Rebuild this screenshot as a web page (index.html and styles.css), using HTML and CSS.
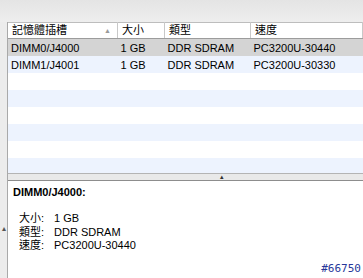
FILE: index.html
```html
<!DOCTYPE html>
<html lang="zh-Hant">
<head>
  <meta charset="UTF-8" />
  <title>記憶體</title>
  <link rel="stylesheet" href="styles.css">
</head>
<body>
  <div class="toolbar"></div>
  <div class="main">
    <div class="gutter"><span class="grip">&#9652;</span></div>
    <div class="panes">
      <div class="list">
        <table>
          <thead>
            <tr>
              <th class="c1">記憶體插槽<span class="sort">&#9650;</span></th>
              <th class="c2">大小</th>
              <th class="c3">類型</th>
              <th class="c4">速度</th>
              <th class="c5"></th>
            </tr>
          </thead>
          <tbody>
            <tr class="sel"><td>DIMM0/J4000</td><td>1 GB</td><td>DDR SDRAM</td><td>PC3200U-30440</td><td></td></tr>
            <tr class="alt"><td>DIMM1/J4001</td><td>1 GB</td><td>DDR SDRAM</td><td>PC3200U-30330</td><td></td></tr>
            <tr><td></td><td></td><td></td><td></td><td></td></tr>
            <tr class="alt"><td></td><td></td><td></td><td></td><td></td></tr>
            <tr><td></td><td></td><td></td><td></td><td></td></tr>
            <tr class="alt"><td></td><td></td><td></td><td></td><td></td></tr>
            <tr><td></td><td></td><td></td><td></td><td></td></tr>
            <tr class="alt"><td></td><td></td><td></td><td></td><td></td></tr>
          </tbody>
        </table>
      </div>
      <div class="divider"><span class="knob">&#9652;</span></div>
      <div class="detail">
        <h2>DIMM0/J4000:</h2>
        <dl>
          <dt>大小:</dt><dd>1 GB</dd>
          <dt>類型:</dt><dd>DDR SDRAM</dd>
          <dt>速度:</dt><dd>PC3200U-30440</dd>
        </dl>
        <div class="tag">#66750</div>
      </div>
    </div>
  </div>
</body>
</html>
```

FILE: styles.css
```css
body { margin: 0; background: #ececec; font-family: "Liberation Sans", "Noto Sans CJK TC", sans-serif; font-size: 11px; color: #000; width: 363px; height: 278px; overflow: hidden; }
.toolbar { height: 22px; background: linear-gradient(#e4e4e4, #eeeeee); }
.main { display: flex; height: 256px; }
.gutter { width: 8px; background: #ececec; display: flex; align-items: flex-start; justify-content: center; }
.grip { font-size: 8px; color: #555; margin-top: 202px; }
.panes { flex: 1; display: flex; flex-direction: column; border-left: 1px solid #a9a9a9; }
.list { height: 151px; background: #fff; overflow: hidden; }
table { width: 100%; border-collapse: collapse; table-layout: fixed; }
th { height: 15px; padding: 0 0 0 4px; text-align: left; font-weight: normal; font-size: 11px; line-height: 15px; background: #fff; border-top: 1px solid #bdbdbd; border-bottom: 1px solid #9c9c9c; border-right: 1px solid #c8c8c8; position: relative; }
.sort { position: absolute; right: 6px; top: 4px; font-size: 7px; line-height: 7px; color: #9a9a9a; }
.c1 { width: 105px; }
.c2 { width: 42px; }
.c3 { width: 81px; }
.c4 { width: 107px; }
td { height: 17px; padding: 0 0 0 3px; white-space: nowrap; overflow: hidden; }
tr.sel td { background: #d4d4d4; }
tr.alt td { background: #edf3fe; }
.divider { height: 6px; background: #e9e9e9; border-top: 1px solid #b4b4b4; border-bottom: 1px solid #8d8d8d; display: flex; justify-content: center; align-items: center; font-size: 7px; color: #333; line-height: 6px; }
.knob { margin-left: 72px; }
.detail { flex: 1; background: #fff; padding: 5px 0 0 5px; position: relative; }
h2 { margin: 0 0 13px; font-size: 11px; font-weight: bold; line-height: 13px; }
dl { margin: 0 0 0 6px; display: grid; grid-template-columns: 35px auto; line-height: 13.5px; }
dt, dd { margin: 0; }
.tag { position: absolute; right: 2px; bottom: 3px; font-family: "DejaVu Sans Mono", monospace; font-size: 11px; color: #27379a; }
```
